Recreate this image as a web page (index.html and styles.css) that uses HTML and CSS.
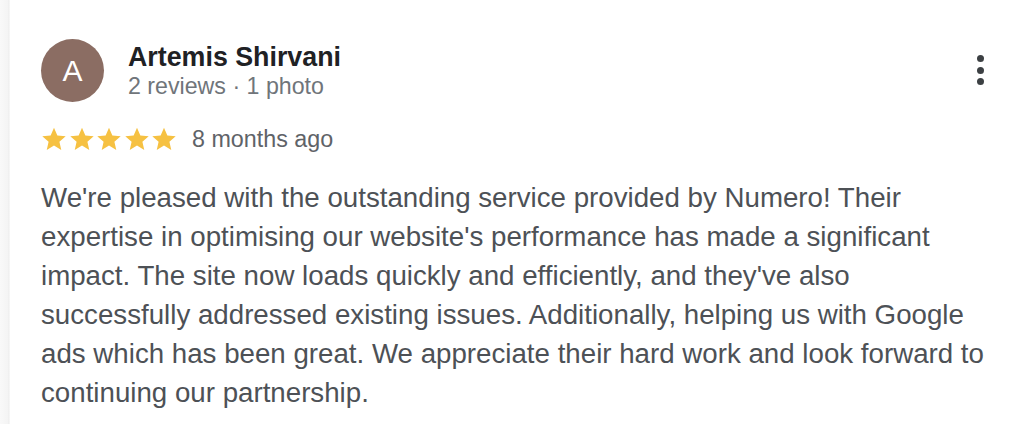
FILE: index.html
```html
<!DOCTYPE html>
<html lang="en">
<head>
<meta charset="utf-8">
<title>Review</title>
<link rel="stylesheet" href="styles.css">
</head>
<body>
<div class="card">
  <div class="header">
    <div class="avatar">A</div>
    <div class="author">
      <div class="name">Artemis Shirvani</div>
      <div class="meta">2 reviews · 1 photo</div>
    </div>
    <div class="more" aria-label="More options">
      <span class="dot"></span><span class="dot"></span><span class="dot"></span>
    </div>
  </div>
  <div class="rating">
    <div class="stars">
      <svg class="star" viewBox="0 0 24 24"><path d="M12 1.6l3.1 7.1 7.7.7-5.8 5.1 1.7 7.6L12 18.1l-6.7 4 1.7-7.6L1.2 9.4l7.7-.7z"/></svg>
      <svg class="star" viewBox="0 0 24 24"><path d="M12 1.6l3.1 7.1 7.7.7-5.8 5.1 1.7 7.6L12 18.1l-6.7 4 1.7-7.6L1.2 9.4l7.7-.7z"/></svg>
      <svg class="star" viewBox="0 0 24 24"><path d="M12 1.6l3.1 7.1 7.7.7-5.8 5.1 1.7 7.6L12 18.1l-6.7 4 1.7-7.6L1.2 9.4l7.7-.7z"/></svg>
      <svg class="star" viewBox="0 0 24 24"><path d="M12 1.6l3.1 7.1 7.7.7-5.8 5.1 1.7 7.6L12 18.1l-6.7 4 1.7-7.6L1.2 9.4l7.7-.7z"/></svg>
      <svg class="star" viewBox="0 0 24 24"><path d="M12 1.6l3.1 7.1 7.7.7-5.8 5.1 1.7 7.6L12 18.1l-6.7 4 1.7-7.6L1.2 9.4l7.7-.7z"/></svg>
    </div>
    <span class="date">8 months ago</span>
  </div>
  <p class="text">We're pleased with the outstanding service provided by Numero! Their expertise in optimising our website's performance has made a significant impact. The site now loads quickly and efficiently, and they've also successfully addressed existing issues. Additionally, helping us with Google ads which has been great. We appreciate their hard work and look forward to continuing our partnership.</p>
</div>
</body>
</html>
```

FILE: styles.css
```css
html, body {
  margin: 0;
  padding: 0;
  background: #fff;
}

body {
  width: 1024px;
  height: 424px;
  overflow: hidden;
  font-family: "Liberation Sans", Arial, Helvetica, sans-serif;
  background: linear-gradient(to right, #f9f9f9 0, #f4f4f4 8px, #ececec 9px, #ffffff 10px);
}

.card {
  padding: 39px 24px 0 41px;
  box-sizing: border-box;
  height: 424px;
}

.header {
  display: flex;
  align-items: flex-start;
  padding-right: 16px;
}

.avatar {
  width: 63px;
  height: 63px;
  border-radius: 50%;
  background: #8b6d63;
  color: #fff;
  font-size: 30px;
  line-height: 63px;
  text-align: center;
  flex: none;
}

.author {
  margin-left: 24px;
  padding-top: 3px;
}

.name {
  font-size: 26.8px;
  line-height: 30px;
  font-weight: bold;
  color: #202124;
}

.meta {
  font-size: 23.2px;
  line-height: 29px;
  color: #70757a;
}

.more {
  margin-left: auto;
  margin-top: 16px;
  display: flex;
  flex-direction: column;
  gap: 4.5px;
}

.dot {
  width: 7px;
  height: 7px;
  border-radius: 50%;
  background: #3c4043;
}

.rating {
  display: flex;
  align-items: center;
  margin-top: 21.6px;
  height: 30px;
}

.stars {
  display: flex;
  gap: 1.5px;
}

.star {
  width: 26px;
  height: 26px;
  fill: #f6c142;
  display: block;
}

.date {
  margin-left: 15px;
  font-size: 23.3px;
  line-height: 30px;
  color: #5f6368;
}

.text {
  margin: 24.3px 0 0;
  font-size: 27.7px;
  line-height: 39px;
  color: #4d5156;
}
```
